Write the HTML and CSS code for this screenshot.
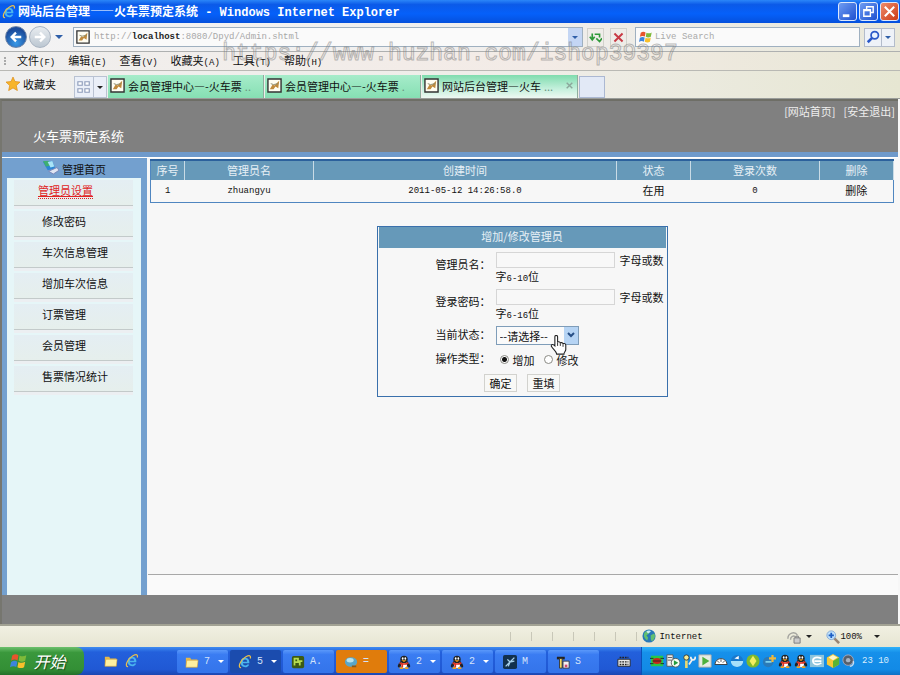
FILE: index.html
```html
<!DOCTYPE html>
<html lang="zh-CN">
<head>
    <meta charset="UTF-8">
    <meta name="viewport" content="width=device-width, initial-scale=1.0">
    <title>网站后台管理——火车票预定系统</title>
    <link rel="stylesheet" href="styles.css">
</head>
<body>
    <svg class="sprite" aria-hidden="true">
        <symbol id="ie" viewBox="0 0 16 16">
            <path d="M13 9.500H5.500C5.800 11.300 7 12 8.300 12c1 0 1.800-.4 2.200-1.200h2.300C12 13 10.300 14 8.200 14 5 14 3 11.700 3 8.600 3 5.500 5.200 3.200 8.200 3.200c3.200 0 5 2.400 4.800 6.300zM5.600 7.600h4.900C10.300 6 9.400 5.200 8.100 5.200S5.900 6.100 5.600 7.600z" fill="#4ab4ee"/>
            <path d="M3.500 14.500C-1 14.500 3 5 9 2c4-2 6-1.500 5 2" fill="none" stroke="#e9c04c" stroke-width="1.400"/>
        </symbol>
        <symbol id="page" viewBox="0 0 16 16">
            <path d="M1 1h14v14H1z" fill="#fffdf2" stroke="#333" stroke-width="1.500"/>
            <path d="M3 12l3-5 2 1 5-5-1 8-3-2-2 3z" fill="#c08a3c"/>
            <path d="M4 6l3 1 5-1" fill="none" stroke="#8a8a6c"/>
        </symbol>
        <symbol id="flag" viewBox="0 0 16 16">
            <path d="M2 3c2-1.500 4-1.200 5.500-.2L6.700 7.500C5 6.500 3 6.500 1 7.700z" fill="#e8542c"/>
            <path d="M8.500 3c2 1.200 4 1 6-.2l-1 4.900c-2 1.200-4 1.200-5.800 0z" fill="#7fba3a"/>
            <path d="M1 8.800c2-1.200 4-1.200 5.500-.2l-.9 4.800c-1.800-1-3.600-1-5.600.2z" fill="#3d84dc"/>
            <path d="M7.500 8.800c2 1.100 4 1 6-.2l-1 4.900c-2 1.200-4 1-5.900 0z" fill="#f8c02c"/>
        </symbol>
        <symbol id="folder" viewBox="0 0 16 16">
            <path d="M1 3h5l1 2h7v9H1z" fill="#e7b84a"/>
            <path d="M2 6h13l-1 8H1z" fill="#fff0a0" stroke="#c99a38" stroke-width=".6"/>
        </symbol>
        <symbol id="penguin" viewBox="0 0 16 16">
            <path d="M3 10c-2 3-1 4 0 3M13 10c2 3 1 4 0 3" stroke="#222" stroke-width="2"/>
            <ellipse cx="8" cy="10" rx="5" ry="5" fill="#222"/>
            <ellipse cx="8" cy="11" rx="3.500" ry="4" fill="#fff"/>
            <circle cx="8" cy="5" r="4.200" fill="#222"/>
            <ellipse cx="6.500" cy="4" rx="1" ry="1.400" fill="#fff"/>
            <ellipse cx="9.500" cy="4" rx="1" ry="1.400" fill="#fff"/>
            <path d="M5 6h6l-3 2zM3 14h4v2H3zM9 14h4v2H9z" fill="#f2a21c"/>
            <path d="M3 8c3 2 7 2 10 0v2c-3 2-5 1-6 1v3H5v-3L3 10z" fill="#e0301e"/>
        </symbol>
        <symbol id="globe" viewBox="0 0 16 16">
            <circle cx="8" cy="8" r="7.500" fill="#2878b8"/>
            <path d="M3 4c3-3 5-2 6-1l-2 3-2 1 2 3-1 3C3 11 1 8 3 4zM10 7l4-2c2 4 0 7-3 9l-1-3z" fill="#62c070"/>
            <path d="M5 3c2-2 5-1 5 0L7 5z" fill="#c8ecf4"/>
        </symbol>
        <symbol id="magnifier" viewBox="0 0 16 16">
            <path d="M2 14l5-5" stroke="#2a58c8" stroke-width="3"/>
            <circle cx="10" cy="6" r="4.200" fill="#e8f2ff" stroke="#2a58c8" stroke-width="2"/>
        </symbol>
    </svg>

    <div class="window">
        <header class="titlebar">
            <svg class="icon"><use href="#ie"/></svg>
            <h1>网站后台管理——火车票预定系统<span class="latin"> - Windows Internet Explorer</span></h1>
            <div class="window-buttons">
                <button type="button" aria-label="最小化"><svg viewBox="0 0 16 16"><path d="M3 11h7v3H3z" fill="#fff"/></svg></button>
                <button type="button" aria-label="还原"><svg viewBox="0 0 16 16"><path d="M6 6V3h7v6h-3M3 6h7v7H3zM3 7h7" fill="none" stroke="#fff" stroke-width="1.500"/></svg></button>
                <button type="button" class="close" aria-label="关闭"><svg viewBox="0 0 16 16"><path d="M3 3l10 10M13 3L3 13" stroke="#fff" stroke-width="2.200"/></svg></button>
            </div>
        </header>

        <div class="navbar">
            <button type="button" class="round back" aria-label="后退"><svg viewBox="0 0 16 16"><path d="M14 8H3M8 3L3 8l5 5" fill="none" stroke="#fff" stroke-width="2.600"/></svg></button>
            <button type="button" class="round forward" aria-label="前进"><svg viewBox="0 0 16 16"><path d="M2 8h11M8 3l5 5-5 5" fill="none" stroke="#fff" stroke-width="2.600"/></svg></button>
            <span class="arrow blue history"></span>
            <div class="address">
                <svg class="icon"><use href="#page"/></svg>
                <input type="text" aria-label="地址">
                <span class="url">http://<b>localhost</b>:8080/Dpyd/Admin.shtml</span>
                <button type="button" class="drop" aria-label="历史地址"><span class="arrow blue"></span></button>
            </div>
            <button type="button" class="tool" aria-label="刷新"><svg viewBox="0 0 16 16"><path d="M4 3v8M1 7l3 4 3-4M7 4h6v4M9 9l4 4 3-4" fill="none" stroke="#2f9a3a" stroke-width="2"/></svg></button>
            <button type="button" class="tool stop" aria-label="停止"><svg viewBox="0 0 16 16"><path d="M3 3l10 10M13 3L3 13" stroke="#c83a44" stroke-width="2.400"/></svg></button>
            <div class="search">
                <svg class="icon"><use href="#flag"/></svg>
                <input type="text" aria-label="搜索" placeholder="Live Search">
            </div>
            <div class="search-buttons">
                <button type="button" aria-label="搜索"><svg class="icon"><use href="#magnifier"/></svg></button>
                <button type="button" class="narrow" aria-label="搜索选项"><span class="arrow blue"></span></button>
            </div>
        </div>

        <nav class="menubar">
            <span class="grip"></span>
            <a href="#">文件<span class="latin">(F)</span></a>
            <a href="#">编辑<span class="latin">(E)</span></a>
            <a href="#">查看<span class="latin">(V)</span></a>
            <a href="#">收藏夹<span class="latin">(A)</span></a>
            <a href="#">工具<span class="latin">(T)</span></a>
            <a href="#">帮助<span class="latin">(H)</span></a>
        </nav>

        <div class="tabbar">
            <button type="button" class="favorites"><svg class="icon" viewBox="0 0 16 16"><path d="M8 0l2.300 5.200 5.700.6-4.200 3.900L13 15.500 8 12.500l-5 3 1.200-5.800L0 5.800l5.700-.6z" fill="#f7b52b" stroke="#dc8d18" stroke-width=".8"/></svg>收藏夹</button>
            <div class="quick">
                <button type="button" aria-label="快速导航选项卡"><svg viewBox="0 0 16 16"><path d="M1 2h5v4H1zM9 2h5v4H9zM1 10h5v4H1zM9 10h5v4H9z" fill="#fff" stroke="#8d9cba" stroke-width="1.300"/></svg></button>
                <button type="button" class="narrow" aria-label="选项卡列表"><span class="arrow"></span></button>
            </div>
            <a class="tab" href="#"><svg class="icon"><use href="#page"/></svg>会员管理中心—-火车票<span class="dots">..</span></a>
            <a class="tab" href="#"><svg class="icon"><use href="#page"/></svg>会员管理中心—-火车票<span class="dots">.</span></a>
            <a class="tab current" href="#"><svg class="icon"><use href="#page"/></svg>网站后台管理—火车<span class="dots">...</span><svg class="tab-close" viewBox="0 0 16 16"><path d="M3 3l10 10M13 3L3 13" stroke="#8ba79b" stroke-width="2.500"/></svg></a>
            <a class="new-tab" href="#" aria-label="新选项卡"></a>
        </div>

        <div class="page">
            <div class="banner">
                <h2>火车票预定系统</h2>
                <div class="banner-links">
                    <a href="#">[网站首页]</a>
                    <a href="#">[安全退出]</a>
                </div>
            </div>

            <div class="layout">
                <aside class="sidebar">
                    <h3><svg viewBox="0 0 18 16"><path d="M1 2l10-1 3 8-8 2z" fill="#2c86d4"/><path d="M1 1l6 0 2 5-5 1z" fill="#3fae70"/><path d="M6 2l5-1 2 6-4 1z" fill="#a9e4f6"/><path d="M7 12l9-4 2 3-6 4z" fill="#dfe6f2" stroke="#7885b8"/></svg>管理首页</h3>
                    <ul>
                        <li class="active"><a href="#">管理员设置</a></li>
                        <li><a href="#">修改密码</a></li>
                        <li><a href="#">车次信息管理</a></li>
                        <li><a href="#">增加车次信息</a></li>
                        <li><a href="#">订票管理</a></li>
                        <li><a href="#">会员管理</a></li>
                        <li><a href="#">售票情况统计</a></li>
                    </ul>
                </aside>

                <main class="content">
                    <table class="admins">
                        <colgroup>
                            <col class="col-no"><col class="col-name"><col><col class="col-state"><col class="col-name"><col class="col-state">
                        </colgroup>
                        <thead>
                            <tr><th>序号</th><th>管理员名</th><th>创建时间</th><th>状态</th><th>登录次数</th><th>删除</th></tr>
                        </thead>
                        <tbody>
                            <tr>
                                <td><span class="latin">1</span></td>
                                <td><span class="latin">zhuangyu</span></td>
                                <td><span class="latin">2011-05-12 14:26:58.0</span></td>
                                <td>在用</td>
                                <td><span class="latin">0</span></td>
                                <td><a href="#">删除</a></td>
                            </tr>
                        </tbody>
                    </table>

                    <form class="admin-form">
                        <h3>增加/修改管理员</h3>
                        <div class="row">
                            <label for="name">管理员名：</label>
                            <div class="field"><input type="text" id="name">字母或数字<span class="latin">6-10</span>位</div>
                        </div>
                        <div class="row">
                            <label for="password">登录密码：</label>
                            <div class="field"><input type="password" id="password">字母或数字<span class="latin">6-16</span>位</div>
                        </div>
                        <div class="row short">
                            <label for="state">当前状态：</label>
                            <div class="field select-field">
                                <select id="state"><option>--请选择--</option></select>
                                <span class="select-arrow"><svg viewBox="0 0 10 10"><path d="M2 3l3 3 3-3" fill="none" stroke="#274f86" stroke-width="2"/></svg></span>
                                <svg class="pointer" viewBox="0 0 18 22"><path d="M5 12V2c0-2 3-2 3 0v6c0-1 3-1 3 1 0-1 3-1 3 1 0-1 3-1 3 1v5c0 2-2 3-2 5H7c0-3-4-5-6-9 0-2 2-2 4 0z" fill="#fff" stroke="#222" stroke-width="1.200"/><path d="M8 8v4M11 9v3M14 10v3" stroke="#222"/></svg>
                            </div>
                        </div>
                        <div class="row short">
                            <span class="label">操作类型：</span>
                            <div class="field radios">
                                <input type="radio" name="action" id="add" checked><label for="add">增加</label>
                                <input type="radio" name="action" id="edit"><label for="edit">修改</label>
                            </div>
                        </div>
                        <div class="buttons">
                            <button type="submit">确定</button>
                            <button type="reset">重填</button>
                        </div>
                    </form>

                    <div class="content-foot"></div>
                </main>
            </div>

            <footer class="page-footer"></footer>
        </div>

        <div class="statusbar">
            <div class="panes"><i></i><i></i><i></i><i></i><i></i><i></i><i></i></div>
            <div class="zone"><svg class="icon"><use href="#globe"/></svg><span class="latin">Internet</span></div>
            <div class="protect"><svg class="icon" viewBox="0 0 16 16"><path d="M1 10c0-7 8-9 11-4M4 11c0-4 4-5 5-3" fill="none" stroke="#a5a5a0" stroke-width="1.600"/><path d="M8 9h7v6H8zM10 9V7h3v2" fill="#ccc" stroke="#777"/></svg><span class="arrow"></span></div>
            <div class="zoom"><svg class="icon" viewBox="0 0 16 16"><path d="M9 9l6 6" stroke="#9a8674" stroke-width="3"/><circle cx="6" cy="6" r="5" fill="#bfe0fb" stroke="#7fa6d4"/><path d="M6 3v6M3 6h6" stroke="#1e5fc4" stroke-width="2"/></svg><span class="latin">100%</span><span class="arrow"></span></div>
        </div>

        <div class="taskbar">
            <button type="button" class="start"><svg><use href="#flag"/></svg>开始</button>
            <div class="launch">
                <svg class="icon"><use href="#folder"/></svg>
                <svg class="icon"><use href="#ie"/></svg>
            </div>
            <div class="tasks">
                <button type="button"><svg class="icon"><use href="#folder"/></svg>7<span class="arrow"></span></button>
                <button type="button" class="pressed"><svg class="icon"><use href="#ie"/></svg>5<span class="arrow"></span></button>
                <button type="button"><svg class="icon" viewBox="0 0 16 16"><rect x="1" y="1" width="14" height="14" rx="2" fill="#3c5a14"/><path d="M4 12V4h4v4H4M10 12V7h3" fill="none" stroke="#b6dc50" stroke-width="2"/></svg>A.</button>
                <button type="button" class="alert"><svg class="icon" viewBox="0 0 16 16"><ellipse cx="8" cy="8" rx="7" ry="5.500" fill="#5aa6c8"/><ellipse cx="7" cy="6" rx="4" ry="2.500" fill="#b6e2ee"/><path d="M9 13h5" stroke="#8a5a1c" stroke-width="2"/></svg>=</button>
                <button type="button"><svg class="icon"><use href="#penguin"/></svg>2<span class="arrow"></span></button>
                <button type="button"><svg class="icon"><use href="#penguin"/></svg>2<span class="arrow"></span></button>
                <button type="button"><svg class="icon" viewBox="0 0 16 16"><rect width="16" height="16" rx="2" fill="#12304e"/><path d="M3 13L13 3M5 5l3 3 5-1M6 13l2-5" fill="none" stroke="#a8d0ec" stroke-width="1.500"/></svg>M</button>
                <button type="button"><svg class="icon" viewBox="0 0 16 16"><path d="M1 2h9v3H1z" fill="#222"/><path d="M4 4h3v11H4z" fill="#f4d860" stroke="#333"/><path d="M8 7h7v8H8z" fill="#f4f0f4" stroke="#333"/><path d="M10 11h3v3h-3z" fill="#d04a6c"/></svg>S</button>
            </div>
            <svg class="icon keyboard" viewBox="0 0 16 16"><path d="M1 6h14v8H1z" fill="#e8e8e8" stroke="#222"/><path d="M3 4h10M3 9h10M3 12h10" stroke="#222" stroke-width="1.500" stroke-dasharray="2 1"/></svg>
            <div class="tray">
                <svg class="icon" viewBox="0 0 16 16"><path d="M1 2h14v12H1z" fill="#28c848"/><path d="M0 5h4M0 11h4M12 5h4M12 11h4" stroke="#222"/><ellipse cx="8" cy="8" rx="5" ry="3.500" fill="#c8281c"/><path d="M3 8h10" stroke="#222"/></svg>
                <svg class="icon" viewBox="0 0 16 16"><path d="M1 1h7v13H1z" fill="#eee" stroke="#555"/><path d="M2 4h5M2 7h5" stroke="#555"/><circle cx="11" cy="10" r="5" fill="#f4fff4" stroke="#555"/><path d="M9 7l5 3-5 3z" fill="#239a3c"/></svg>
                <svg class="icon" viewBox="0 0 16 16"><path d="M5 7v9" stroke="#e8d870" stroke-width="3"/><circle cx="5" cy="4" r="3" fill="#f6ec94" stroke="#333"/><path d="M10 3c0 5 6 5 5 0M8 12l4-6" fill="none" stroke="#eee" stroke-width="2"/></svg>
                <svg class="icon" viewBox="0 0 16 16"><path d="M1 1h14v14H1z" fill="#e6ece4" stroke="#aaa"/><path d="M5 3l8 5-8 5z" fill="#4db13e"/></svg>
                <svg class="icon" viewBox="0 0 16 16"><path d="M1 12c1-9 13-9 14 0z" fill="#fff" stroke="#333"/><path d="M8 6v3M4 8l2 2M12 8l-2 2" stroke="#444"/></svg>
                <svg class="icon" viewBox="0 0 16 16"><circle cx="8" cy="8" r="7" fill="#1878cc"/><path d="M1 8h14c0 9-14 9-14 0z" fill="#a8e0fa"/><path d="M5 5l5-3v4z" fill="#fff"/></svg>
                <svg class="icon" viewBox="0 0 16 16"><circle cx="8" cy="8" r="7.500" fill="#7fb92c"/><path d="M8 2l4 6-4 6-4-6z" fill="#f4ee60"/></svg>
                <svg class="icon" viewBox="0 0 16 16"><circle cx="7" cy="9" r="6" fill="#2a7ab8"/><path d="M4 9h7" stroke="#7bd0ee" stroke-width="2"/><path d="M12 1v8M8 5h8" stroke="#f0b83c" stroke-width="2.500"/></svg>
                <svg class="icon"><use href="#penguin"/></svg>
                <svg class="icon"><use href="#penguin"/></svg>
                <svg class="icon" viewBox="0 0 16 16"><path d="M0 1h16v14H0z" fill="#8cc4dc"/><path d="M13 5c-8-3-11 1-9 5 2 3 7 2 9 0M5 8h8" fill="none" stroke="#fff" stroke-width="2"/></svg>
                <svg class="icon" viewBox="0 0 16 16"><path d="M8 0l7 4v8l-7 4-7-4V4z" fill="#f6c838"/><path d="M8 8l7-4v8l-7 4z" fill="#5ab434"/><path d="M8 1l5 3-5 3-5-3z" fill="#fff6c8"/></svg>
                <svg class="icon" viewBox="0 0 16 16"><circle cx="7" cy="7" r="6" fill="#57606c" stroke="#aab"/><circle cx="7" cy="7" r="2.500" fill="#a8b4c4"/><path d="M13 8c1 3-1 6-4 6" fill="none" stroke="#cde" stroke-width="1.500"/></svg>
                <span class="clock">23 10</span>
            </div>
        </div>
    </div>

    <div class="watermark">https://www.huzhan.com/ishop39397</div>
</body>
</html>
```

FILE: styles.css
```css
* {
    box-sizing: border-box;
}
body {
    position: relative;
    margin: 0;
    font-family: "Noto Sans CJK SC", sans-serif;
    font-size: 11px;
    line-height: 16px;
    color: #111;
    background-color: #f7f7f7;
}
h1, h2, h3, ul {
    margin: 0;
    padding: 0;
    font-weight: normal;
}
a {
    color: inherit;
    text-decoration: none;
}
button, input, select {
    font-family: inherit;
    font-size: 11px;
    line-height: 16px;
    color: inherit;
    margin: 0;
    padding: 0;
}
button {
    display: flex;
    align-items: center;
    justify-content: center;
    background: none;
    border: none;
}
svg {
    display: block;
    flex: none;
}
.sprite {
    position: absolute;
    width: 0;
    height: 0;
}
.icon {
    width: 14px;
    height: 14px;
}
.latin {
    font-family: "Liberation Mono", monospace;
    font-size: 9px;
}
.arrow {
    flex: none;
    border: 3px solid transparent;
    border-top-color: #222;
    border-bottom: none;
}
.arrow.blue {
    border-top-color: #2f5fa8;
}
.window {
    display: flex;
    flex-direction: column;
    min-height: 100vh;
}

/* title bar */
.titlebar {
    display: flex;
    align-items: center;
    gap: 2px;
    height: 23px;
    padding: 0 1px 0 2px;
    background: linear-gradient(#2b86f8, #0b5ae8 20%, #0560fa 60%, #0550dc);
    color: #fff;
}
.titlebar h1 {
    flex: 1;
    font-size: 12px;
    font-weight: bold;
    white-space: pre;
}
.titlebar .latin {
    font-size: 12px;
}
.window-buttons {
    display: flex;
    gap: 2px;
}
.window-buttons button {
    width: 19px;
    height: 19px;
    border: 1px solid #dce8fc;
    border-radius: 3px;
    background: linear-gradient(135deg, #6f9cf2, #1d50d0);
}
.window-buttons svg {
    width: 15px;
    height: 15px;
}
.window-buttons .close {
    background: linear-gradient(135deg, #ee8c6c, #cc3a14);
}

/* address bar */
.navbar {
    display: flex;
    align-items: center;
    height: 29px;
    padding: 0 5px;
    background: linear-gradient(90deg, #f3f3f4, #f0eeec 60%, #e9e8da);
    border-bottom: 1px solid #aeb0b0;
}
.round {
    width: 22px;
    height: 22px;
    margin-right: 2px;
    border-radius: 50%;
}
.round svg {
    width: 14px;
    height: 14px;
}
.back {
    border: 1px solid #6d84a8;
    background: radial-gradient(circle at 50% 80%, #3a9ae8, #1b4c9c 70%);
}
.forward {
    border: 1px solid #a9b4c2;
    background: linear-gradient(#e8ecf0, #bcc7d2);
}
.history {
    margin: 0 10px 0 2px;
    border-width: 4px;
    border-bottom: none;
}
.address, .search {
    position: relative;
    display: flex;
    align-items: center;
    height: 20px;
    border: 1px solid #9fb0c0;
    background-color: #fafafa;
}
.address {
    flex: 510;
}
.search {
    flex: 224;
}
.address .icon {
    margin: 0 4px 0 2px;
}
.search .icon {
    margin: 0 2px 0 3px;
}
.address input, .search input {
    flex: 1;
    min-width: 0;
    height: 18px;
    border: none;
    background: none;
    outline: none;
    font-family: "Liberation Mono", monospace;
    font-size: 9px;
}
.search input::placeholder {
    color: #aaa;
}
.url {
    position: absolute;
    left: 20px;
    font-family: "Liberation Mono", monospace;
    font-size: 9px;
    color: #a8a8a8;
}
.url b {
    color: #222;
}
.drop {
    width: 14px;
    height: 18px;
    background-color: #c4d6f4;
}
.tool {
    width: 17px;
    height: 19px;
    margin-left: 4px;
    border: 1px solid #d2d2cc;
}
.tool svg {
    width: 13px;
    height: 13px;
}
.stop {
    margin: 0 8px 0 6px;
}
.search-buttons {
    display: flex;
    margin-left: 4px;
}
.search-buttons button {
    width: 18px;
    height: 19px;
    border: 1px solid #b3bccb;
    background-color: #eef2f8;
}
.search-buttons .narrow {
    width: 13px;
    border-left: none;
}

/* menu */
.menubar {
    display: flex;
    align-items: center;
    gap: 13px;
    height: 19px;
    padding-left: 4px;
    background: linear-gradient(90deg, #f0efee, #f3ebe6 60%, #e8e7d6);
    border-bottom: 1px solid #b9b9b4;
}
.grip {
    height: 8px;
    margin-right: -2px;
    border-left: 2px dotted #aaa;
}

/* tabs */
.tabbar {
    display: flex;
    align-items: flex-end;
    height: 28px;
    padding: 0 6px;
    background: linear-gradient(90deg, #efefee, #efede8 60%, #e6e6d2);
    border-bottom: 1px solid #9a9d9a;
}
.favorites {
    gap: 3px;
    height: 26px;
    margin-right: 18px;
    padding-bottom: 2px;
}
.quick {
    display: flex;
    margin-right: 1px;
}
.quick button {
    width: 20px;
    height: 22px;
    border: 1px solid #b9c2d2;
    background-color: #eaeff8;
}
.quick svg {
    width: 14px;
    height: 14px;
}
.quick .narrow {
    width: 13px;
    border-left: none;
}
.tab {
    display: flex;
    align-items: center;
    gap: 3px;
    width: 156px;
    height: 23px;
    padding: 0 3px 2px 2px;
    margin-right: 1px;
    border-right: 1px solid #8fae9e;
    background: linear-gradient(#a6ecca, #86dfb3);
    white-space: nowrap;
}
.tab .icon {
    width: 15px;
    height: 15px;
}
.tab.current {
    background: linear-gradient(#7fdcae, #c4f0dc 60%, #eef8f2);
}
.dots {
    color: #6a9480;
}
.tab-close {
    width: 9px;
    height: 9px;
    margin-left: auto;
}
.new-tab {
    width: 26px;
    height: 22px;
    border: 1px solid #abb8d2;
    background-color: #e2e9f6;
}

/* web page */
.page {
    flex: 1;
    display: flex;
    flex-direction: column;
    margin-right: 2px;
    border-top: 2px solid #6e6e66;
    border-left: 2px solid #76766f;
    background-color: #f7f7f7;
}
.banner {
    display: flex;
    justify-content: space-between;
    height: 56px;
    padding: 2px 3px 0 31px;
    background-color: #808080;
    border-bottom: 5px solid #6f9acb;
    color: #fff;
}
.banner h2 {
    padding-top: 25px;
    font-size: 13px;
    line-height: 16px;
}
.banner-links {
    display: flex;
    gap: 8px;
    color: #eee;
}
.layout {
    flex: 1;
    display: flex;
    border-top: 1px solid #fff;
}
.sidebar {
    width: 145px;
    border: solid #73a0cf;
    border-width: 0 6px 0 5px;
    background-color: #e6f6f8;
}
.sidebar h3 {
    display: flex;
    align-items: center;
    justify-content: center;
    gap: 3px;
    height: 20px;
    padding-top: 2px;
    background-color: #73a0cf;
    font-size: 11px;
}
.sidebar h3 svg {
    width: 17px;
    height: 15px;
    margin-bottom: 4px;
}
.sidebar ul {
    list-style: none;
    padding: 2px 8px 0 7px;
}
.sidebar li {
    height: 26px;
    margin-bottom: 5px;
    padding: 2px 0 0 28px;
    border-bottom: 1px solid #c3caca;
    background: linear-gradient(#e4eef3, #e6efec);
    box-shadow: 0 3px 0 #eceff2;
}
.sidebar .active {
    padding-left: 24px;
    color: #e02424;
}
.sidebar .active a {
    border-bottom: 1px dotted #e02424;
    text-decoration: underline;
}
.content {
    flex: 1;
    display: flex;
    flex-direction: column;
    align-items: center;
    padding: 1px 0 0 1px;
}
.admins {
    width: calc(100% - 6px);
    margin: 0 4px 0 2px;
    table-layout: fixed;
    border-collapse: collapse;
    border: 1px solid #4f86c0;
    border-top: 2px solid #2c619c;
    text-align: center;
}
.admins th {
    height: 20px;
    padding: 0 0 2px;
    background-color: #6699b9;
    border-right: 1px solid #c9dbe6;
    color: #e6f0f6;
    font-weight: normal;
}
.admins td {
    height: 20px;
    padding: 0 0 3px;
}
.col-no {
    width: 34px;
}
.col-name {
    width: 129px;
}
.col-state {
    width: 74px;
}

/* add / edit form */
.admin-form {
    width: 291px;
    margin: 23px 2px 0 0;
    padding-bottom: 4px;
    border: 1px solid #3a70ac;
}
.admin-form h3 {
    height: 21px;
    margin: 0 1px 4px;
    padding-top: 1px;
    background-color: #6699b9;
    color: #e6f0f6;
    font-size: 11px;
    text-align: center;
}
.row {
    display: flex;
    align-items: flex-start;
    height: 37px;
}
.row.short {
    height: 24px;
}
.row > label, .row > .label {
    width: 118px;
    padding: 4px 0 0 58px;
    white-space: nowrap;
}
.row.short > label, .row.short > .label {
    padding-top: 0;
}
.field {
    width: 168px;
    line-height: 16px;
}
.field input[type="text"], .field input[type="password"] {
    width: 119px;
    height: 16px;
    margin-right: 5px;
    border: 1px solid #d6d6d6;
    background-color: #f8f8f8;
    vertical-align: top;
}
.select-field {
    position: relative;
}
.field select {
    display: block;
    width: 83px;
    height: 19px;
    padding-left: 3px;
    appearance: none;
    border: 1px solid #7f9db9;
    border-radius: 0;
    background-color: #fafafa;
}
.select-arrow {
    position: absolute;
    top: 1px;
    left: 68px;
    width: 14px;
    height: 17px;
    padding: 3px 2px;
    background-color: #b6d4f4;
    pointer-events: none;
}
.pointer {
    position: absolute;
    top: 9px;
    left: 54px;
    width: 17px;
    height: 20px;
}
.radios {
    display: flex;
    align-items: center;
}
.radios input {
    appearance: none;
    width: 9px;
    height: 9px;
    margin: 0 4px;
    border: 1px solid #8a8a84;
    border-radius: 50%;
    background-color: #fff;
}
.radios input:checked {
    background: radial-gradient(#111 2px, #fff 3px);
}
.radios label {
    padding-top: 2px;
    margin-right: 5px;
}
.buttons {
    display: flex;
    justify-content: center;
    gap: 10px;
}
.buttons button {
    width: 33px;
    height: 18px;
    border: 1px solid #d2d2ce;
    background-color: #f8f8f6;
}
.content-foot {
    align-self: stretch;
    height: 21px;
    margin-top: auto;
    border-top: 1px solid #a8a8a8;
    background-color: #fafafa;
}
.page-footer {
    height: 29px;
    background-color: #808080;
}

/* status bar */
.statusbar {
    display: flex;
    align-items: center;
    justify-content: flex-end;
    height: 23px;
    padding-right: 20px;
    border-top: 2px solid #a2a294;
    background: linear-gradient(#f1f0e2, #e6e5d2);
}
.panes {
    display: flex;
    gap: 20px;
    margin-right: 5px;
}
.panes i {
    height: 9px;
    border-left: 1px solid #c8c7b8;
}
.zone {
    display: flex;
    gap: 3px;
    width: 145px;
}
.protect {
    display: flex;
    align-items: center;
    gap: 5px;
    width: 39px;
}
.zoom {
    display: flex;
    align-items: center;
}
.zoom .arrow {
    margin-left: 12px;
}

/* taskbar */
.taskbar {
    display: flex;
    height: 28px;
    background: linear-gradient(#3f8cf0, #2360dc 18%, #2058d4 80%, #1c46b0);
    color: #fff;
}
.start {
    gap: 5px;
    width: 84px;
    padding-right: 8px;
    border-radius: 0 8px 8px 0;
    background: linear-gradient(#6cc06c, #3a983c 20%, #338f35 80%, #23702a);
    font-size: 16px;
    font-style: italic;
    text-shadow: 1px 1px 1px #1c4a1c;
}
.start svg {
    width: 18px;
    height: 18px;
}
.launch {
    display: flex;
    align-items: center;
    gap: 7px;
    width: 93px;
    padding-left: 20px;
}
.tasks {
    flex: 1;
    display: flex;
    gap: 2px;
    padding: 3px 0 2px;
}
.tasks button {
    flex: 1;
    justify-content: flex-start;
    gap: 5px;
    max-width: 51px;
    padding-left: 8px;
    border-radius: 2px;
    background: linear-gradient(#5a98fa, #3a7cf2 20%, #3474ea);
    font-family: "Liberation Mono", monospace;
    font-size: 10px;
    color: #d4e2fa;
}
.tasks .pressed {
    background: #1b4cae;
}
.tasks .alert {
    background: #e07c0c;
}
.tasks .arrow {
    margin: 0 4px 0 auto;
    border-top-color: #fff;
}
.keyboard {
    align-self: center;
    margin: 0 10px;
}
.tray {
    display: flex;
    align-items: center;
    gap: 2px;
    padding: 0 11px 0 8px;
    border-left: 1px solid #0a50b8;
    background: linear-gradient(#2fb2fa, #1690ea 20%, #128ae6 80%, #1070c4);
}
.tray .clock {
    margin-left: 4px;
    font-family: "Liberation Mono", monospace;
    font-size: 9px;
    color: #d8ecfc;
}

.watermark {
    position: absolute;
    top: 38px;
    left: 0;
    right: 0;
    font-family: "Liberation Mono", monospace;
    font-size: 23px;
    line-height: 32px;
    text-align: center;
    color: transparent;
    -webkit-text-stroke: 1px rgba(120, 120, 120, 0.5);
    pointer-events: none;
}
```
